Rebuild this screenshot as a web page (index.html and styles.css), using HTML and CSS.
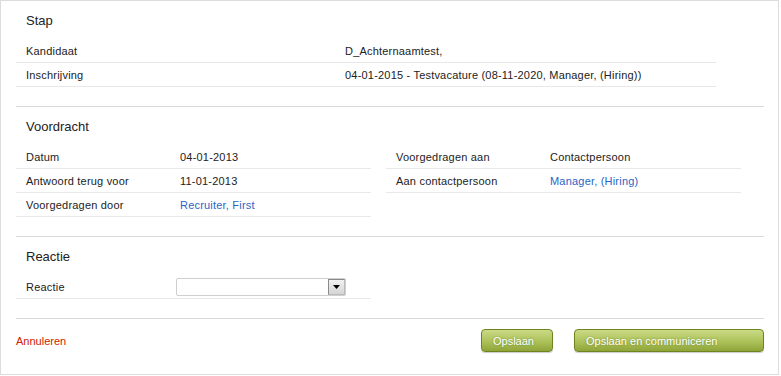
FILE: index.html
```html
<!DOCTYPE html>
<html lang="nl">
<head>
  <meta charset="UTF-8" />
  <title>Voordracht</title>
  <link rel="stylesheet" href="styles.css">
</head>
<body>
  <div class="page">

    <div class="section">
      <h2>Stap</h2>
      <div class="table wide">
        <div class="row"><span class="label">Kandidaat</span><span class="value">D_Achternaamtest,</span></div>
        <div class="row"><span class="label">Inschrijving</span><span class="value">04-01-2015 - Testvacature (08-11-2020, Manager, (Hiring))</span></div>
      </div>
    </div>

    <div class="section">
      <h2>Voordracht</h2>
      <div class="columns">
        <div class="table">
          <div class="row"><span class="label">Datum</span><span class="value">04-01-2013</span></div>
          <div class="row"><span class="label">Antwoord terug voor</span><span class="value">11-01-2013</span></div>
          <div class="row"><span class="label">Voorgedragen door</span><span class="value"><a href="#">Recruiter, First</a></span></div>
        </div>
        <div class="table">
          <div class="row"><span class="label">Voorgedragen aan</span><span class="value">Contactpersoon</span></div>
          <div class="row"><span class="label">Aan contactpersoon</span><span class="value"><a href="#">Manager, (Hiring)</a></span></div>
        </div>
      </div>
    </div>

    <div class="section">
      <h2>Reactie</h2>
      <div class="table">
        <div class="row">
          <span class="label">Reactie</span>
          <span class="value">
            <span class="select">
              <span class="select-btn">
                <svg width="7" height="4" viewBox="0 0 7 4"><path d="M0 0h7L3.5 4z" fill="#000"/></svg>
              </span>
            </span>
          </span>
        </div>
      </div>
    </div>

    <div class="footer">
      <a href="#" class="cancel">Annuleren</a>
      <div class="actions">
        <button class="button small">Opslaan</button>
        <button class="button large">Opslaan en communiceren</button>
      </div>
    </div>

  </div>
</body>
</html>
```

FILE: styles.css
```css
* {
  margin: 0;
  padding: 0;
  box-sizing: border-box;
}

body {
  font-family: 'Liberation Sans', Arial, sans-serif;
  font-size: 11px;
  letter-spacing: 0.2px;
  color: #222;
  background: #fff;
}

a {
  color: #2b64c6;
  text-decoration: none;
}

.page {
  width: 779px;
  height: 375px;
  border: 1px solid #dcdcdc;
  padding: 0 14px 0 15px;
}

.section {
  padding: 9px 0 19px;
  border-bottom: 1px solid #dadada;
}

h2 {
  font-size: 13px;
  font-weight: normal;
  letter-spacing: 0;
  height: 20px;
  line-height: 21px;
  padding-left: 10px;
  margin-bottom: 9px;
}

.table {
  width: 355px;
}

.table.wide {
  width: 700px;
}

.row {
  display: flex;
  align-items: center;
  height: 24px;
  border-bottom: 1px solid #e8e8e8;
}

.label {
  width: 164px;
  padding-left: 10px;
  flex-shrink: 0;
}

.wide .label {
  width: 329px;
}

.columns {
  display: flex;
  gap: 15px;
}

.select {
  display: flex;
  justify-content: flex-end;
  width: 170px;
  height: 18px;
  margin-left: -4px;
  border: 1px solid #cfcfcf;
  border-radius: 2px;
  background: #fff;
}

.select-btn {
  display: flex;
  align-items: center;
  justify-content: center;
  width: 17px;
  height: 16px;
  border: 1px solid #8a8a8a;
  border-right-color: #bbb;
  border-bottom-color: #bbb;
  background: linear-gradient(#f2f2f2, #d4d4d4);
}

.footer {
  display: flex;
  justify-content: space-between;
  align-items: center;
  padding-top: 10px;
}

.cancel {
  color: #cc2200;
  letter-spacing: 0;
}

.actions {
  display: flex;
  gap: 21px;
}

.button {
  height: 23px;
  padding: 0 11px;
  text-align: left;
  font-family: 'Liberation Sans', Arial, sans-serif;
  font-size: 11px;
  letter-spacing: 0;
  color: #fff;
  text-shadow: 0 0 2px rgba(60, 80, 0, 0.5);
  background: linear-gradient(#cadb86, #a9bf55 60%, #8fa53a);
  border: 1px solid #6f8420;
  border-radius: 4px;
  box-shadow: 0 1px 1px rgba(0, 0, 0, 0.2);
  cursor: pointer;
}

.button.small {
  width: 72px;
}

.button.large {
  width: 190px;
}
```
